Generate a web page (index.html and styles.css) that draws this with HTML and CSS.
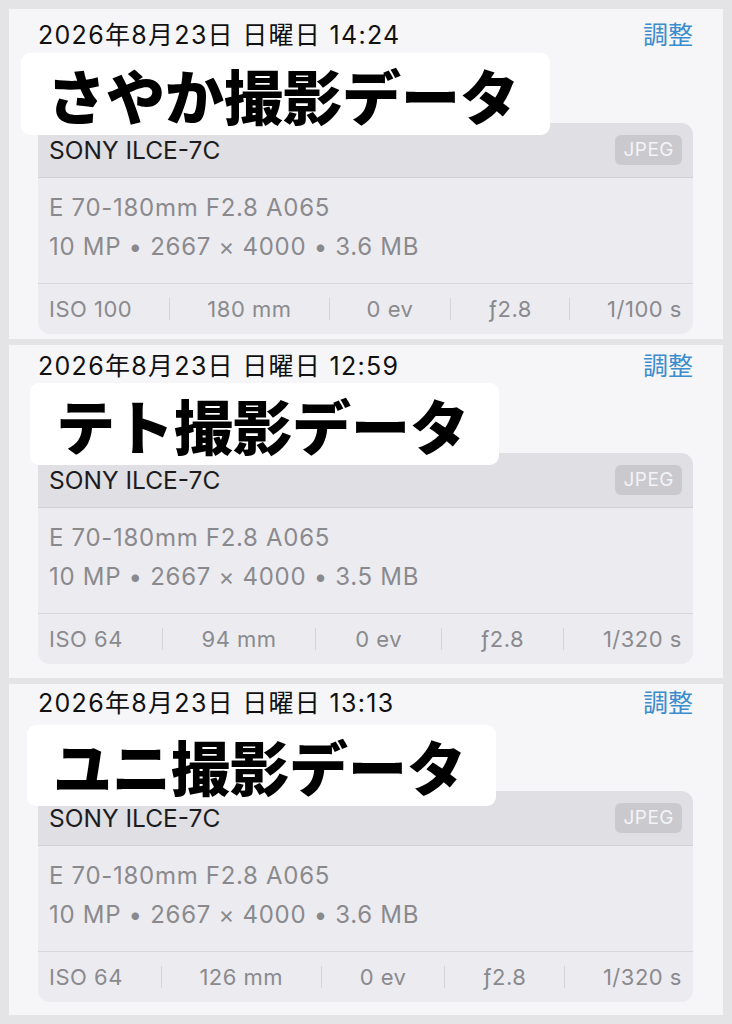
FILE: index.html
```html
<!DOCTYPE html>
<html lang="ja">
<head>
<meta charset="utf-8">
<title>撮影データ</title>
<link rel="stylesheet" href="styles.css">
</head>
<body>
<div class="screen">
  <section class="panel panel-1">
    <div class="date-row">
      <span class="date">2026年8月23日 日曜日 14:24</span>
      <span class="adjust">調整</span>
    </div>
    <div class="label label-1">さやか撮影データ</div>
    <div class="card">
      <div class="card-head">
        <span class="camera">SONY ILCE-7C</span>
        <span class="badge">JPEG</span>
      </div>
      <div class="card-body">
        <div class="line">E 70-180mm F2.8 A065</div>
        <div class="line">10 MP • 2667 × 4000 • 3.6 MB</div>
      </div>
      <div class="exif">
        <span>ISO 100</span><i class="sep"></i>
        <span>180 mm</span><i class="sep"></i>
        <span>0 ev</span><i class="sep"></i>
        <span>ƒ2.8</span><i class="sep"></i>
        <span>1/100 s</span>
      </div>
    </div>
  </section>

  <section class="panel panel-2">
    <div class="date-row">
      <span class="date">2026年8月23日 日曜日 12:59</span>
      <span class="adjust">調整</span>
    </div>
    <div class="label label-2">テト撮影データ</div>
    <div class="card">
      <div class="card-head">
        <span class="camera">SONY ILCE-7C</span>
        <span class="badge">JPEG</span>
      </div>
      <div class="card-body">
        <div class="line">E 70-180mm F2.8 A065</div>
        <div class="line">10 MP • 2667 × 4000 • 3.5 MB</div>
      </div>
      <div class="exif">
        <span>ISO 64</span><i class="sep"></i>
        <span>94 mm</span><i class="sep"></i>
        <span>0 ev</span><i class="sep"></i>
        <span>ƒ2.8</span><i class="sep"></i>
        <span>1/320 s</span>
      </div>
    </div>
  </section>

  <section class="panel panel-3">
    <div class="date-row">
      <span class="date">2026年8月23日 日曜日 13:13</span>
      <span class="adjust">調整</span>
    </div>
    <div class="label label-3">ユニ撮影データ</div>
    <div class="card">
      <div class="card-head">
        <span class="camera">SONY ILCE-7C</span>
        <span class="badge">JPEG</span>
      </div>
      <div class="card-body">
        <div class="line">E 70-180mm F2.8 A065</div>
        <div class="line">10 MP • 2667 × 4000 • 3.6 MB</div>
      </div>
      <div class="exif">
        <span>ISO 64</span><i class="sep"></i>
        <span>126 mm</span><i class="sep"></i>
        <span>0 ev</span><i class="sep"></i>
        <span>ƒ2.8</span><i class="sep"></i>
        <span>1/320 s</span>
      </div>
    </div>
  </section>
</div>
</body>
</html>
```

FILE: styles.css
```css
html, body {
  margin: 0;
  padding: 0;
  background: #e4e4e6;
}
body {
  width: 732px;
  height: 1024px;
  overflow: hidden;
  font-family: Inter, "Noto Sans CJK JP", sans-serif;
}
.screen {
  display: flex;
  flex-direction: column;
  gap: 6px;
  padding: 9px 9px 0 9px;
}
.panel {
  background: #f6f6f8;
  padding: 0 30px 0 29px;
  display: flex;
  flex-direction: column;
}
.panel-1 { padding-top: 11px; padding-bottom: 5px; }
.panel-2 { padding-top: 6px; padding-bottom: 14px; }
.panel-3 { padding-top: 4px; padding-bottom: 13px; }

.date-row {
  display: flex;
  justify-content: space-between;
  align-items: center;
  height: 30px;
  font-size: 25px;
  line-height: 30px;
}
.date {
  color: #111;
  letter-spacing: 1.3px;
}
.adjust {
  color: #3b8dcd;
}

.label {
  position: relative;
  z-index: 2;
  align-self: flex-start;
  display: flex;
  align-items: center;
  background: #fff;
  border-radius: 9px;
  height: 82px;
  line-height: 1;
  padding: 0 30px 0 26px;
  font-family: "Noto Sans CJK JP", sans-serif;
  font-weight: 900;
  font-size: 59px;
  color: #000;
  letter-spacing: 0;
}
.label-1 { margin: 3px 0 -12px -17px; padding-right: 31px; }
.label-2 { margin: 2px 0 -12px -8px; }
.label-3 { margin: 7px 0 -15px -11px; height: 81px; }

.card {
  position: relative;
  z-index: 1;
  background: #ececf0;
  border-radius: 12px;
  overflow: hidden;
}
.card-head {
  background: #dfdfe4;
  height: 54px;
  border-bottom: 1px solid #d1d1d6;
  display: flex;
  align-items: center;
  justify-content: space-between;
  padding: 0 11px;
}
.camera {
  font-size: 24.5px;
  line-height: 1;
  color: #1c1c1e;
}
.badge {
  background: #c9c9ce;
  color: #f4f4f6;
  font-size: 19px;
  line-height: 30px;
  height: 30px;
  padding: 0 8px;
  border-radius: 6px;
  letter-spacing: 0.5px;
}
.card-body {
  padding: 15px 11px 21px;
  border-bottom: 1px solid #d6d6db;
  display: flex;
  flex-direction: column;
  gap: 9px;
}
.line {
  font-size: 24px;
  line-height: 30px;
  color: #8a8a8e;
  letter-spacing: 0.7px;
}
.exif {
  height: 50px;
  display: flex;
  align-items: center;
  justify-content: space-between;
  padding: 0 11px;
  font-size: 22px;
  letter-spacing: 0.5px;
  color: #8a8a8e;
}
.sep {
  display: block;
  width: 1px;
  height: 22px;
  background: #d4d4d9;
}
```
